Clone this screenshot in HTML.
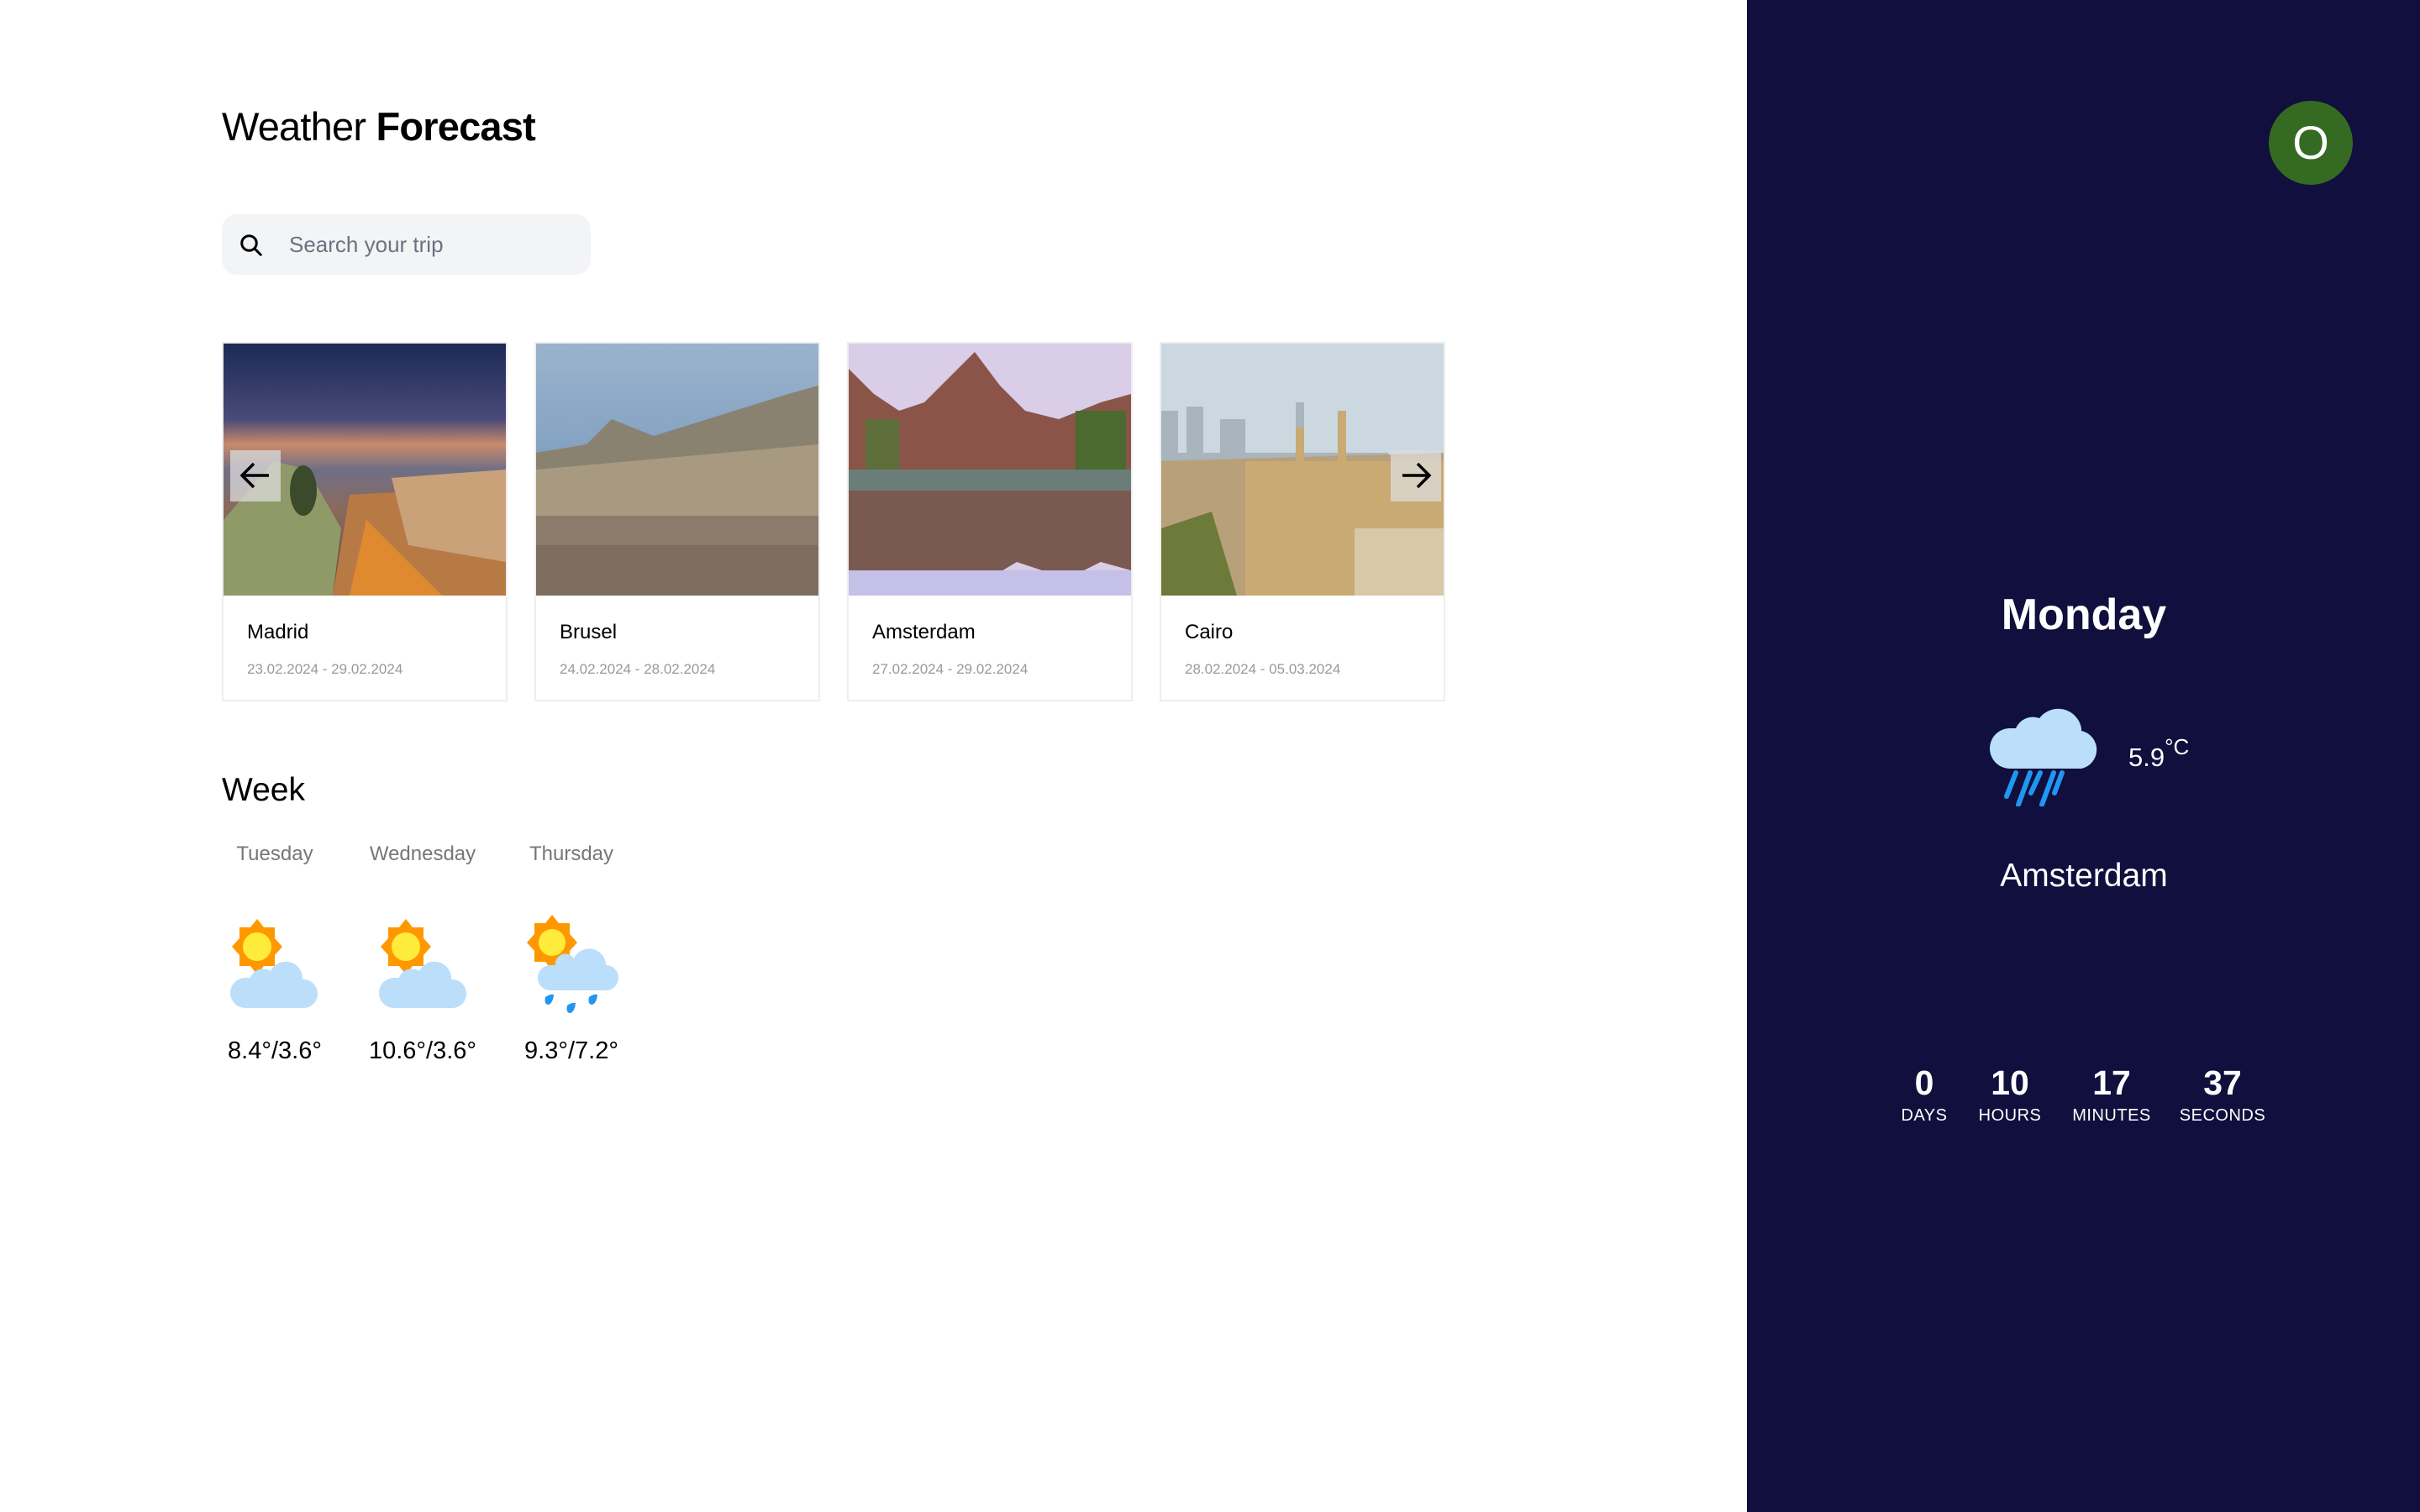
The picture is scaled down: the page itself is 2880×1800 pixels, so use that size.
<!DOCTYPE html>
<html><head><meta charset="utf-8"><style>
*{margin:0;padding:0;box-sizing:border-box}
body{width:2880px;height:1800px;position:relative;background:#fff;font-family:"Liberation Sans",sans-serif;overflow:hidden}
.abs{position:absolute}
.side{left:2079px;top:0;width:801px;height:1800px;background:#100f3d}
h1{position:absolute;left:264px;top:123px;font-size:47px;font-weight:400;color:#000;letter-spacing:-0.8px}
h1 b{font-weight:700}
.search{left:264px;top:255px;width:439px;height:72px;background:#f3f4f6;border-radius:18px}
.search span{position:absolute;left:80px;top:21px;font-size:26px;color:#6b7280}
.card{position:absolute;top:407px;width:340px;height:428px;border:2px solid #eee;background:#fff}
.img{position:absolute;left:0;top:0;width:336px;height:300px;overflow:hidden}
.name{position:absolute;left:28px;top:330px;font-size:24px;color:#000}
.date{position:absolute;left:28px;top:378px;font-size:17px;color:#999}
.arrow{position:absolute;top:536px;width:60px;height:61px;background:rgba(220,220,220,.75)}
.week{left:264px;top:919px;font-size:39px;color:#000}
.day{position:absolute;top:1003px;font-size:24px;color:#777;width:200px;text-align:center}
.temp{position:absolute;top:1235px;font-size:29px;color:#000;width:200px;text-align:center}
.cd{position:absolute;top:1265px;width:200px;text-align:center;color:#fff}
.cd b{display:block;font-size:41px;font-weight:700;line-height:48px}
.cd span{display:block;font-size:20px;margin-top:4px;letter-spacing:.5px}
</style></head><body>
<h1>Weather <b>Forecast</b></h1>
<div class="abs search">
<svg class="abs" style="left:20px;top:22px" width="30" height="30" viewBox="0 0 24 24"><circle cx="10" cy="10" r="7" fill="none" stroke="#000" stroke-width="2.4"/><path d="M15 15l6 6" stroke="#000" stroke-width="2.4" stroke-linecap="round"/></svg>
<span>Search your trip</span></div>

<div class="card" style="left:264px"><div class="img">
<svg width="336" height="300" viewBox="0 0 336 300" preserveAspectRatio="none">
<defs><linearGradient id="m1" x1="0" y1="0" x2="0" y2="1"><stop offset="0" stop-color="#1c2a55"/><stop offset=".3" stop-color="#4a4a78"/><stop offset=".4" stop-color="#c98a6a"/><stop offset=".5" stop-color="#6f6f86"/><stop offset=".65" stop-color="#8a6a5e"/><stop offset="1" stop-color="#6a4c35"/></linearGradient></defs>
<rect width="336" height="300" fill="url(#m1)"/>
<path d="M130 300L150 180L336 170L336 300Z" fill="#b87a45"/>
<path d="M150 300L170 210L260 300Z" fill="#e08a30"/>
<path d="M0 300L0 210L60 140L100 150L140 220L130 300Z" fill="#8f9a68"/>
<ellipse cx="95" cy="175" rx="16" ry="30" fill="#3a4a2a"/>
<path d="M200 160L336 150L336 260L220 240Z" fill="#c9a27a"/>
</svg></div><div class="name">Madrid</div><div class="date">23.02.2024 - 29.02.2024</div></div>

<div class="card" style="left:636px"><div class="img">
<svg width="336" height="300" viewBox="0 0 336 300" preserveAspectRatio="none">
<defs><linearGradient id="b1" x1="0" y1="0" x2="0" y2="1"><stop offset="0" stop-color="#9bb3cc"/><stop offset=".5" stop-color="#7f9fc0"/></linearGradient></defs>
<rect width="336" height="300" fill="url(#b1)"/>
<path d="M0 130L60 120L90 90L140 110L300 60L336 50L336 210L0 210Z" fill="#8a8270"/>
<path d="M0 150L336 120L336 210L0 210Z" fill="#a79a80"/>
<rect x="0" y="205" width="336" height="95" fill="#8a7b6a"/>
<rect x="0" y="240" width="336" height="60" fill="#7d6e5f"/>
</svg></div><div class="name">Brusel</div><div class="date">24.02.2024 - 28.02.2024</div></div>

<div class="card" style="left:1008px"><div class="img">
<svg width="336" height="300" viewBox="0 0 336 300" preserveAspectRatio="none">
<rect width="336" height="300" fill="#d9cde8"/>
<path d="M0 30L30 60L60 80L90 70L120 40L150 10L180 50L210 80L250 90L300 70L336 60L336 160L0 160Z" fill="#8a5548"/>
<rect x="20" y="90" width="40" height="70" fill="#5e6e3a"/><rect x="270" y="80" width="60" height="80" fill="#4a6a30"/>
<rect x="0" y="150" width="336" height="25" fill="#6a7d78"/>
<path d="M0 175L336 175L336 270L300 260L260 280L200 260L150 290L100 270L50 280L0 270Z" fill="#7a5a50"/>
<rect x="0" y="270" width="336" height="30" fill="#c4c0e8"/>
</svg></div><div class="name">Amsterdam</div><div class="date">27.02.2024 - 29.02.2024</div></div>

<div class="card" style="left:1380px"><div class="img">
<svg width="336" height="300" viewBox="0 0 336 300" preserveAspectRatio="none">
<rect width="336" height="300" fill="#ccd8e0"/>
<path d="M0 80h20v50h10v-55h20v55h20v-40h30v40h60v-60h10v60h100v100H0Z" fill="#a9b4bc"/>
<path d="M0 140L336 130L336 300L0 300Z" fill="#b8a07a"/>
<path d="M100 140h60v-40h10v40h40v-60h10v60h126v160H100Z" fill="#c9aa72"/>
<path d="M0 220L60 200L90 300L0 300Z" fill="#6e7a3a"/>
<rect x="230" y="220" width="106" height="80" fill="#d8c8a8"/>
</svg></div><div class="name">Cairo</div><div class="date">28.02.2024 - 05.03.2024</div></div>

<div class="arrow" style="left:274px"><svg width="60" height="61" viewBox="0 0 60 61"><path d="M46 30H14M28 16L14 30L28 44" fill="none" stroke="#000" stroke-width="3.5"/></svg></div>
<div class="arrow" style="left:1655px"><svg width="60" height="61" viewBox="0 0 60 61"><path d="M14 30H46M32 16L46 30L32 44" fill="none" stroke="#000" stroke-width="3.5"/></svg></div>

<div class="abs week">Week</div>
<div class="day" style="left:227px">Tuesday</div>
<div class="day" style="left:403px">Wednesday</div>
<div class="day" style="left:580px">Thursday</div>

<svg class="abs" style="left:270px;top:1092px" width="110" height="110" viewBox="0 0 110 110">
<polygon points="36,2 44,12 57,12 57,25 66,35 57,45 57,58 44,58 36,68 28,58 15,58 15,45 6,35 15,25 15,12 28,12" fill="#ff9800"/>
<circle cx="36" cy="35" r="17" fill="#ffeb3b"/>
<path d="M22 108a18 18 0 0 1 0-36h6a16 16 0 0 1 24-8a20 20 0 0 1 38 8v2a17 17 0 0 1 2 34Z" fill="#bbdefb"/></svg>
<svg class="abs" style="left:447px;top:1092px" width="110" height="110" viewBox="0 0 110 110">
<polygon points="36,2 44,12 57,12 57,25 66,35 57,45 57,58 44,58 36,68 28,58 15,58 15,45 6,35 15,25 15,12 28,12" fill="#ff9800"/>
<circle cx="36" cy="35" r="17" fill="#ffeb3b"/>
<path d="M22 108a18 18 0 0 1 0-36h6a16 16 0 0 1 24-8a20 20 0 0 1 38 8v2a17 17 0 0 1 2 34Z" fill="#bbdefb"/></svg>
<svg class="abs" style="left:627px;top:1087px" width="110" height="120" viewBox="0 0 110 120">
<polygon points="30,2 38,12 51,12 51,25 60,35 51,45 51,58 38,58 30,68 22,58 9,58 9,45 0,35 9,25 9,12 22,12" fill="#ff9800"/>
<circle cx="30" cy="35" r="16" fill="#ffeb3b"/>
<path d="M28 92a15 15 0 0 1 0-30h6a12 12 0 0 1 22-8a20 20 0 0 1 38 6v2a15 15 0 0 1 0 30Z" fill="#bbdefb"/>
<path d="M22 100q6-4 10-3q-1 10-6 12q-6 0-4-9Z M48 110q6-4 10-3q-1 10-6 12q-6 0-4-9Z M74 100q6-4 10-3q-1 10-6 12q-6 0-4-9Z" fill="#2196f3"/></svg>

<div class="temp" style="left:227px">8.4°/3.6°</div>
<div class="temp" style="left:403px">10.6°/3.6°</div>
<div class="temp" style="left:580px">9.3°/7.2°</div>

<div class="abs side"></div>
<div class="abs" style="left:2700px;top:120px;width:100px;height:100px;border-radius:50%;background:#356a22;color:#fff;font-size:56px;text-align:center;line-height:100px">O</div>
<div class="abs" style="left:2280px;top:702px;width:400px;text-align:center;color:#fff;font-size:52px;font-weight:700">Monday</div>
<svg class="abs" style="left:2362px;top:820px" width="140" height="140" viewBox="0 0 140 140">
<path d="M30 95a24 24 0 0 1 0-48h7a22 22 0 0 1 28-12a28 28 0 0 1 50 12v3a23 23 0 0 1 0 45Z" fill="#bbdefb"/>
<g stroke="#2196f3" stroke-width="6" stroke-linecap="round"><path d="M26 128L37 100M40 138L54 100M55 124L66 100M68 138L82 100M83 124L92 100"/></g></svg>
<div class="abs" style="left:2533px;top:874px;color:#fff;font-size:31px">5.9<sup style="font-size:26px;vertical-align:14px">°C</sup></div>
<div class="abs" style="left:2280px;top:1021px;width:400px;text-align:center;color:#fff;font-size:39px">Amsterdam</div>
<div class="cd" style="left:2190px"><b>0</b><span>DAYS</span></div>
<div class="cd" style="left:2292px"><b>10</b><span>HOURS</span></div>
<div class="cd" style="left:2413px"><b>17</b><span>MINUTES</span></div>
<div class="cd" style="left:2545px"><b>37</b><span>SECONDS</span></div>
</body></html>
